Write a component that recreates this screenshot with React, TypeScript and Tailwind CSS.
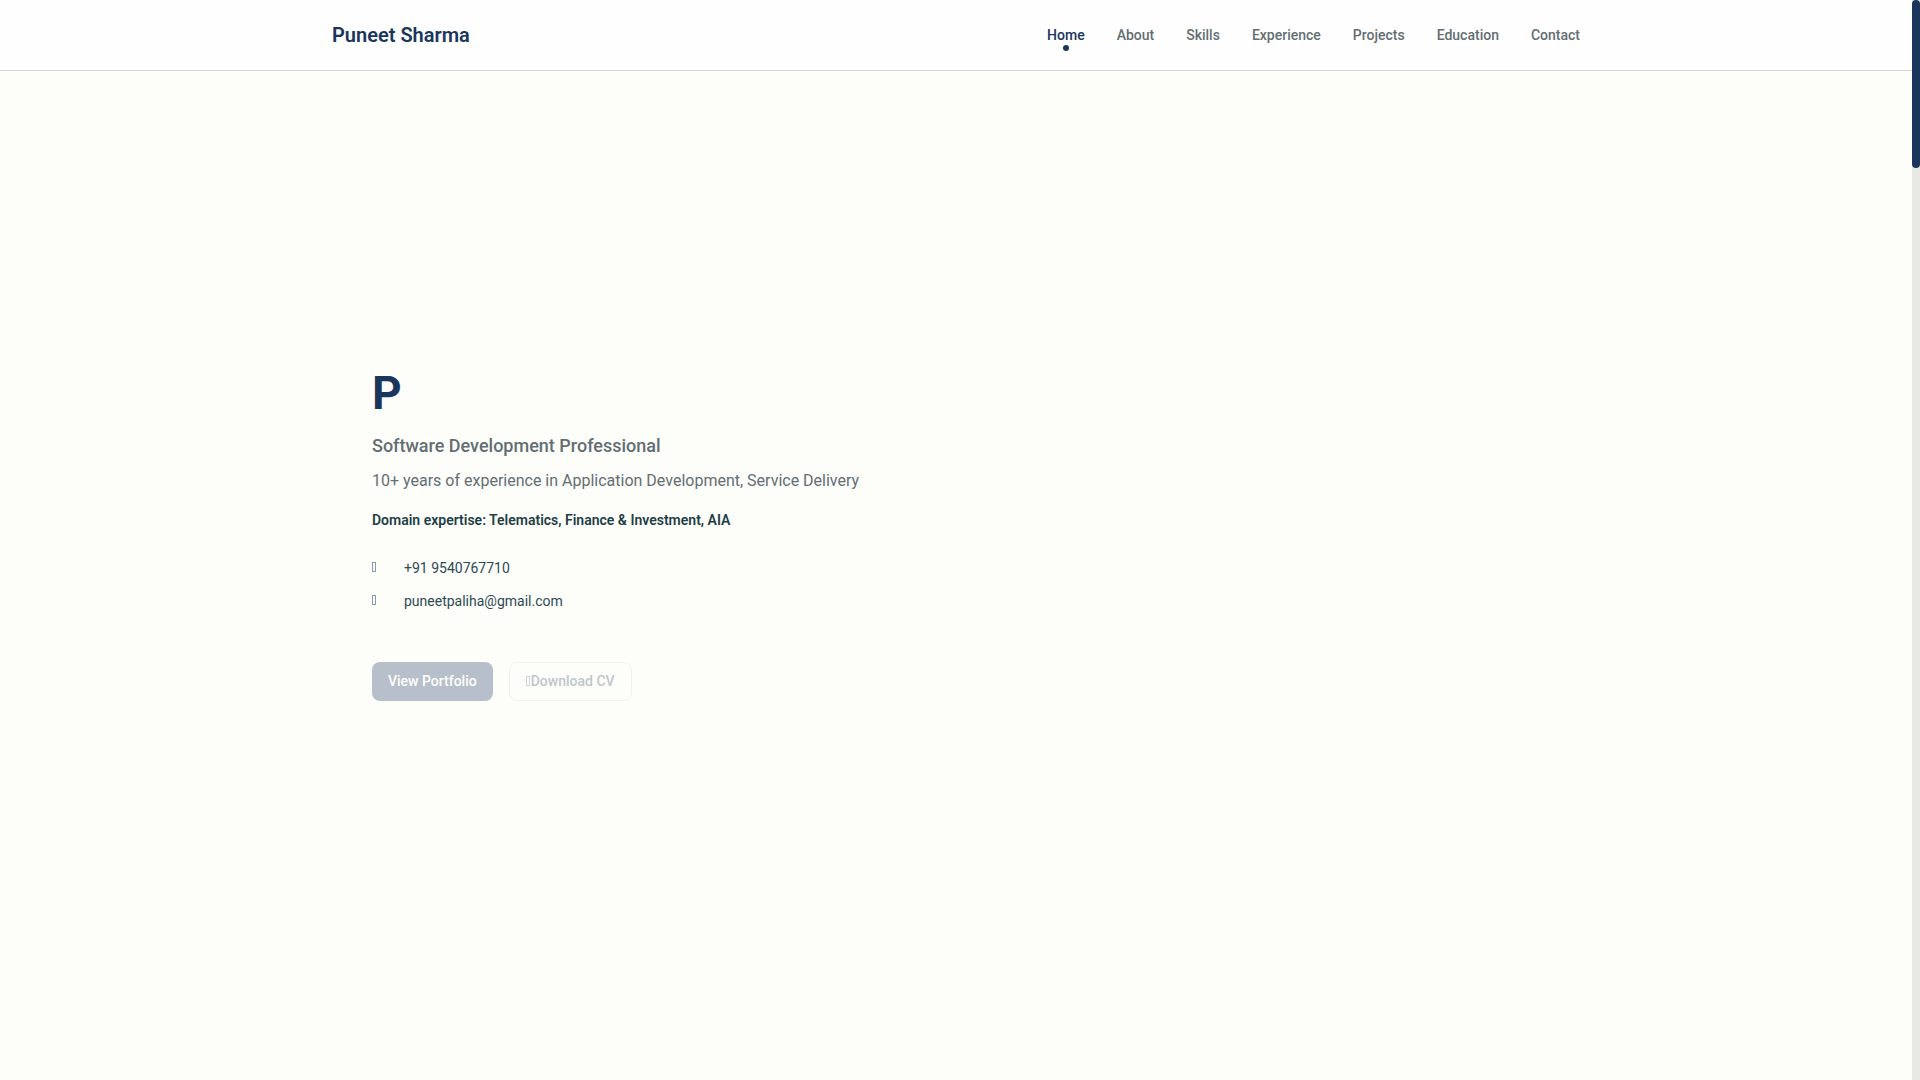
import clsx from 'clsx';

const navItems = ['Home', 'About', 'Skills', 'Experience', 'Projects', 'Education', 'Contact'];

const contacts = [
  { href: 'tel:+919540767710', label: '+91 9540767710' },
  { href: 'mailto:puneetpaliha@gmail.com', label: 'puneetpaliha@gmail.com' },
];

function IconBox({ className }: { className?: string }) {
  return <span aria-hidden="true" className={clsx('block w-1 h-[10px] border border-current shrink-0', className)} />;
}

function Header() {
  return (
    <header className="bg-[#fefefe] border-b border-[#d5d6d3]">
      <div className="max-w-7xl mx-auto px-4 h-[70px] flex items-center justify-between">
        <a href="#home" className="text-xl font-semibold text-[#1a365d]">
          Puneet Sharma
        </a>
        <nav>
          <ul className="flex gap-8">
            {navItems.map((item, i) => (
              <li key={item} className="relative">
                <a
                  href={`#${item.toLowerCase()}`}
                  className={clsx('block text-sm font-medium', i === 0 ? 'text-[#1a365d]' : 'text-[#636e72]')}
                >
                  {item}
                </a>
                {i === 0 && (
                  <span className="absolute left-1/2 top-full -translate-x-1/2 w-1.5 h-1.5 rounded-full bg-[#1a365d]" />
                )}
              </li>
            ))}
          </ul>
        </nav>
      </div>
    </header>
  );
}

function Hero() {
  return (
    <main id="home" className="flex-1 flex flex-col justify-center pb-[86px]">
      <div className="w-full max-w-7xl mx-auto px-14">
        <h1 className="text-[46px] leading-[58px] font-bold text-[#1a365d]">P</h1>
        <h2 className="mt-2.5 text-lg leading-7 font-medium text-[#636e72]">Software Development Professional</h2>
        <p className="mt-2 text-base leading-[26px] text-[#636e72]">
          10+ years of experience in Application Development, Service Delivery
        </p>
        <p className="mt-3.5 text-sm leading-6 font-semibold text-[#1e3f45]">
          Domain expertise: Telematics, Finance &amp; Investment, AIA
        </p>
        <ul className="mt-6 space-y-2">
          {contacts.map((c) => (
            <li key={c.href} className="flex items-center gap-7 text-sm leading-[25px] text-[#2d4a53]">
              <IconBox className="mb-1 text-[#8c9aae]" />
              <a href={c.href}>{c.label}</a>
            </li>
          ))}
        </ul>
        <div className="mt-12 flex gap-4 opacity-30">
          <button type="button" className="h-[39px] px-4 pb-0.5 rounded-lg bg-[#1a365d] text-sm font-medium text-white">
            View Portfolio
          </button>
          <button
            type="button"
            className="h-[39px] px-4 pb-0.5 rounded-lg border border-[#d5d6d3] flex items-center gap-px text-sm font-medium text-[#2d4a53]"
          >
            <IconBox className="text-[#6b7c95]" />
            Download CV
          </button>
        </div>
      </div>
    </main>
  );
}

export default function App() {
  return (
    <div className="min-h-screen flex bg-[#fdfdfa] font-['Roboto',sans-serif]">
      <div className="flex-1 flex flex-col">
        <Header />
        <Hero />
      </div>
      <div className="w-2 bg-[#e8e8e4]">
        <div className="h-[168px] rounded bg-[#1a365d]" />
      </div>
    </div>
  );
}
